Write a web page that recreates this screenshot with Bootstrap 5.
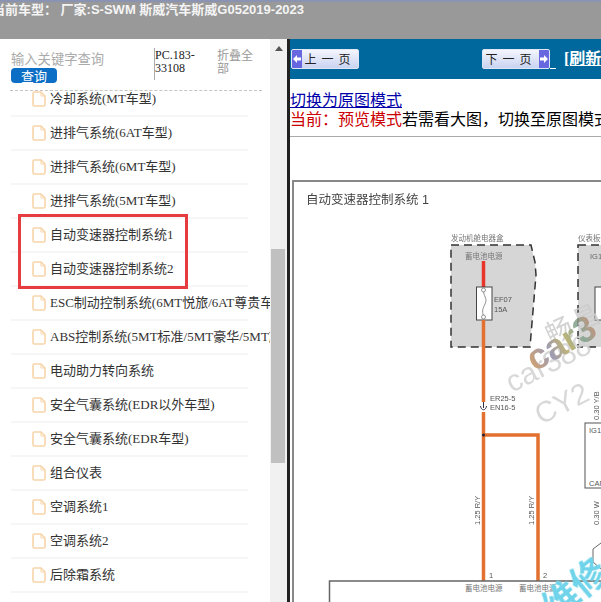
<!DOCTYPE html>
<html lang="zh-CN">
<head>
  <meta charset="UTF-8"/>
  <title>当前车型</title>
  <meta name="viewport" content="width=device-width, initial-scale=1"/>
  <link href="https://cdn.jsdelivr.net/npm/bootstrap@5.3.0/dist/css/bootstrap.min.css" rel="stylesheet"/>
  <style>
    html,body{height:602px;overflow:hidden;}
    body{font-family:"Liberation Serif","Noto Sans CJK SC",serif;background:#fff;color:#000;}
    .top-title{height:39px;background:#999;border-top:2px solid #8b93b3;color:#f4f4f4;font:700 13px/14px "Liberation Sans","Noto Sans CJK SC",sans-serif;white-space:nowrap;overflow:hidden;flex:none;padding-top:1px;}
    .top-title span{display:block;margin-left:-8px;}
    .page-main{height:563px;}
    .left-pane{width:287px;flex:none;}
    .left-inner{width:270px;flex:none;}
    .search-head{height:52px;margin:0 8px 0 10px;border-bottom:1px dashed #c4c4c4;flex:none;padding-top:9px;position:relative;z-index:1;background:#fff;}
    .search-box{width:144px;flex:none;padding-left:1px;}
    .search-ph{font:13.3px/18px "Noto Sans CJK SC",sans-serif;color:#aaa;margin-top:2px;}
    .search-btn{display:block;width:46px;height:15px;padding:0;border:0;border-radius:4px;background:#0c6fc5;color:#fff;font:13px/15px "Noto Sans CJK SC",sans-serif;}
    .pc-code{width:63px;flex:none;height:32px;border-left:1px solid #aaa;font-size:12px;line-height:12.5px;color:#222;padding-top:1px;}
    .fold-all{width:36px;font:12px/12.5px "Noto Sans CJK SC",sans-serif;color:#999;padding-top:1px;}
    .tree-wrap{overflow:hidden;min-height:0;}
    .tree-list{margin:-8px 0 0 11px;width:237px;border-radius:0;background:transparent;}
    .tree-list .list-group-item{height:34px;padding:0 0 1px 21px;border:0;border-bottom:2px solid #f6f6f6;background:transparent;display:flex;align-items:center;gap:4px;font-size:13px;color:#333;white-space:nowrap;}
    .tree-list svg{flex:none;}
    .red-mark{position:absolute;left:18px;top:175px;width:170px;height:75px;border:3px solid #e63b3f;}
    .fake-scroll{width:17px;flex:none;background:#f1f1f1;}
    .scroll-up{width:0;height:0;border-left:4px solid transparent;border-right:4px solid transparent;border-bottom:5px solid #555;margin:7px auto 0;}
    .scroll-thumb{width:14px;height:214px;background:#c0c0c0;margin:198px 0 0 1px;}
    .right-pane{min-width:0;border-left:3px solid #222;overflow:hidden;}
    .nav-strip{height:40px;background:#00689c;padding-left:1px;flex:none;white-space:nowrap;}
    .page-btn{width:68px;height:20px;flex:none;padding:0;border:1px solid #dfe6f6;border-radius:2px;background:linear-gradient(#f4f6fd,#c9d3f0);font:12px/18px "Noto Sans CJK SC",sans-serif;color:#222;overflow:hidden;letter-spacing:5px;white-space:nowrap;}
    .btn-cap{width:10px;align-self:stretch;background:#6767e0;flex:none;}
    .btn-next{margin-left:123px;}
    .btn-tail{color:#fff;width:6px;height:20px;border-bottom:1px solid #fff;flex:none;}
    .reload-link{color:#fff;font-weight:700;font-size:16px;margin-left:8px;white-space:nowrap;}
    .mode-area{height:58px;border-bottom:1px solid #aaa;font:16px/19px "Noto Sans CJK SC",sans-serif;white-space:nowrap;padding-top:11px;flex:none;}
    .mode-area a{color:#00a;display:inline-block;}
    .mode-red{color:#c00;}
    .sheet{margin:43px 0 0 2px;width:340px;flex:none;border:2px solid #888;border-right:0;border-bottom:0;height:424px;}
    .sheet svg{display:block;filter:blur(.35px);}
    .sheet text{font-family:"Liberation Sans","Noto Sans CJK SC",sans-serif;}
  </style>
</head>
<body class="d-flex flex-column">
<div class="top-title"><span>当前车型： 厂家:S-SWM 斯威汽车斯威G052019-2023</span></div>
<div class="page-main d-flex">
  <div class="left-pane d-flex position-relative">
    <div class="left-inner d-flex flex-column">
      <div class="search-head d-flex">
        <div class="search-box">
          <div class="search-ph">输入关键字查询</div>
          <button class="search-btn" type="button">查询</button>
        </div>
        <div class="pc-code">PC.183-33108</div>
        <div class="fold-all">折叠全部</div>
      </div>
      <div class="tree-wrap flex-grow-1">
        <ul class="list-group list-group-flush tree-list" id="tree"></ul>
      </div>
    </div>
    <div class="fake-scroll">
      <div class="scroll-up"></div>
      <div class="scroll-thumb"></div>
    </div>
    <div class="red-mark"></div>
  </div>
  <div class="right-pane flex-grow-1 d-flex flex-column">
    <div class="nav-strip d-flex align-items-center">
      <button class="page-btn d-flex align-items-center" type="button">
        <span class="btn-cap d-flex align-items-center justify-content-center"><svg width="8" height="10" viewBox="0 0 8 10"><path d="M0 5 4 1V3.500H8V6.500H4V9Z" fill="#fff"/></svg></span>
        <span class="flex-grow-1 text-center">上一页</span>
      </button>
      <button class="page-btn btn-next d-flex align-items-center" type="button">
        <span class="flex-grow-1 text-center">下一页</span>
        <span class="btn-cap d-flex align-items-center justify-content-center"><svg width="8" height="10" viewBox="0 0 8 10"><path d="M8 5 4 1V3.500H0V6.500H4V9Z" fill="#fff"/></svg></span>
      </button>
      <span class="btn-tail"></span>
      <a class="reload-link" href="#">[刷新页面]</a>
    </div>
    <div class="mode-area">
      <a href="#">切换为原图模式</a><br/>
      <span class="mode-red">当前：预览模式</span>若需看大图，切换至原图模式
    </div>
    <div class="sheet">
      <svg width="340" height="424" viewBox="294 182 340 424">
        <defs>
          <linearGradient id="rainbow" x1="0" y1="0" x2="1" y2="0">
            <stop offset="0" stop-color="#c9925a"/>
            <stop offset=".3" stop-color="#8d8aa8"/>
            <stop offset=".55" stop-color="#b7a85c"/>
            <stop offset=".8" stop-color="#7ea08e"/>
            <stop offset="1" stop-color="#c08a70"/>
          </linearGradient>
        </defs>
        <text x="306" y="204" font-size="12.500" fill="#444">自动变速器控制系统 1</text>

        <path d="M451 245H531L535 262 536 275 530 347H451Z" fill="#d6d6d6" stroke="#333" stroke-width="1.500" stroke-dasharray="8 5"/>
        <text x="451" y="241" font-size="7.500" fill="#777">发动机舱电器盒</text>
        <text x="465" y="259" font-size="7.500" fill="#777">蓄电池电源</text>
        <path d="M483.500 261V288" stroke="#e8352a" stroke-width="3.500"/>
        <rect x="476.500" y="287" width="15.500" height="33" fill="#fff" stroke="#444"/>
        <path d="M483.500 290C483 296 488 298 485 304S482 312 484 317" fill="none" stroke="#777" stroke-width=".8"/>
        <circle cx="483.500" cy="290" r="2" fill="#fff" stroke="#666" stroke-width=".7"/>
        <circle cx="483.500" cy="317" r="2" fill="#fff" stroke="#666" stroke-width=".7"/>
        <text x="494" y="302" font-size="7.500" fill="#555">EF07</text>
        <text x="494" y="312" font-size="7.500" fill="#555">15A</text>

        <path d="M578 245H640V347H578Z" fill="#d6d6d6" stroke="#333" stroke-width="1.500" stroke-dasharray="8 5"/>
        <text x="578" y="241" font-size="7.500" fill="#777">仪表板保险盒</text>
        <text x="590" y="259" font-size="7.500" fill="#666">IG1</text>
        <rect x="595" y="287" width="20" height="33" fill="#fff" stroke="#444"/>

        <path d="M483.500 320V402M483.500 412V581M483.500 435H538V581" fill="none" stroke="#e2702f" stroke-width="3.500"/>
        <path d="M483.500 402V408M480.500 406C481 411 486 411 486.500 406" fill="none" stroke="#334" stroke-width="1"/>
        <circle cx="483.500" cy="435" r="1.500" fill="#223"/>
        <text x="490" y="401" font-size="7.500" fill="#555">ER25-5</text>
        <text x="490" y="410" font-size="7.500" fill="#555">EN16-5</text>
        <text transform="translate(480 525) rotate(-90)" font-size="7.500" fill="#555">1.25  R/Y</text>
        <text transform="translate(534 525) rotate(-90)" font-size="7.500" fill="#555">1.25  R/Y</text>
        <text x="489" y="578" font-size="7.500" fill="#555">1</text>
        <text x="543" y="578" font-size="7.500" fill="#555">2</text>

        <text transform="translate(599 420) rotate(-90)" font-size="7.500" fill="#555">0.30  Y/B</text>
        <rect x="585" y="423" width="60" height="65" fill="#fff" stroke="#555"/>
        <text x="589" y="433" font-size="7.500" fill="#555">IG1</text>
        <text x="589" y="486" font-size="7.500" fill="#555">CAN</text>
        <text transform="translate(599 525) rotate(-90)" font-size="7.500" fill="#555">0.30  W</text>
        <path d="M601 543 593 549V562L601 569" fill="none" stroke="#666"/>

        <rect x="329.500" y="581" width="320" height="40" fill="#fff" stroke="#666" stroke-width="1.500"/>
        <text x="465" y="591" font-size="7.500" fill="#777">蓄电池电源</text>
        <text x="519" y="591" font-size="7.500" fill="#777">蓄电池电源</text>

        <g opacity=".85">
          <text transform="translate(551 345) rotate(-25)" font-size="27" fill="#ccc">畅</text>
          <text transform="translate(578 332) rotate(-25)" font-size="27" fill="#ccc">昌</text>
          <text transform="translate(512 393) rotate(-27)" font-size="30" fill="#d2d2d2">car388</text>
          <text transform="translate(541 425) rotate(-27)" font-size="29" fill="#d2d2d2">CY2</text>
          <text transform="translate(535 372) rotate(-30)" font-size="36" font-weight="700" fill="url(#rainbow)">car3</text>
        </g>
        <text transform="translate(556 622) rotate(-40)" font-size="36" font-weight="700" fill="#6fd4ea">维修</text>
      </svg>
    </div>
  </div>
</div>
<script src="https://cdn.jsdelivr.net/npm/bootstrap@5.3.0/dist/js/bootstrap.bundle.min.js"></script>
<script>
const treeItems = ['冷却系统(MT车型)','进排气系统(6AT车型)','进排气系统(6MT车型)','进排气系统(5MT车型)','自动变速器控制系统1','自动变速器控制系统2','ESC制动控制系统(6MT悦旅/6AT尊贵车型)','ABS控制系统(5MT标准/5MT豪华/5MT旗舰车型)','电动助力转向系统','安全气囊系统(EDR以外车型)','安全气囊系统(EDR车型)','组合仪表','空调系统1','空调系统2','后除霜系统','座椅加热系统'];
const fileIcon = '<svg width="14" height="16" viewBox="0 0 14 16"><path d="M2.500 1H9L13 5V13.500Q13 15 11.500 15H2.500Q1 15 1 13.500V2.500Q1 1 2.500 1Z" fill="#fff" stroke="#f8d5a8" stroke-width="1.600"/><path d="M9 1V5H13" fill="none" stroke="#f8d5a8" stroke-width="1"/></svg>';
document.getElementById('tree').innerHTML = treeItems.map(t => `<li class="list-group-item">${fileIcon}<span>${t}</span></li>`).join('');
</script>
</body>
</html>
